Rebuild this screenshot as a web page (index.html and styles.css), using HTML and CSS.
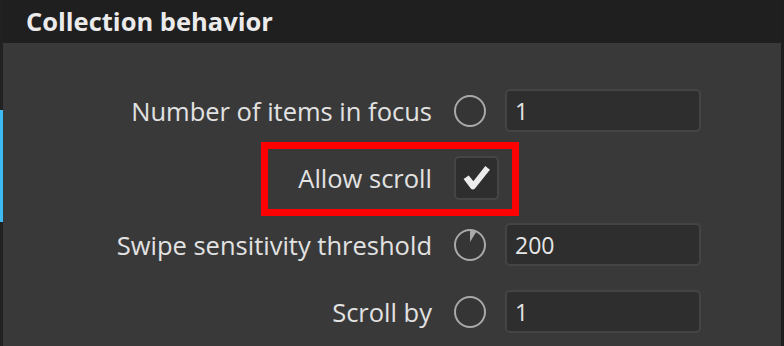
FILE: index.html
```html
<!DOCTYPE html>
<html lang="en">
<head>
  <meta charset="UTF-8">
  <meta name="viewport" content="width=device-width, initial-scale=1.0">
  <title>Collection behavior</title>
  <link rel="stylesheet" href="styles.css">
</head>
<body>
  <div class="window">
    <div class="rail">
      <div class="rail-mark"></div>
    </div>
    <div class="main">
      <div class="section-title">Collection behavior</div>
      <div class="panel">
        <div class="form">
          <label class="label" for="focusCount">Number of items in focus</label>
          <svg class="bind" viewBox="0 0 32 32"><circle cx="16" cy="16" r="15" /></svg>
          <input class="field" id="focusCount" type="text" value="1">

          <label class="label" for="allowScroll">Allow scroll</label>
          <div class="check" id="allowScroll">
            <svg viewBox="0 0 28 24"><path d="M1.5 13.5 L6.5 10 L11 15.5 L22.5 1 L27 4.5 L12.5 22.5 Q10.5 24.5 8.5 22.5 Z" /></svg>
          </div>
          <div></div>

          <label class="label" for="swipeThreshold">Swipe sensitivity threshold</label>
          <svg class="bind" viewBox="0 0 32 32">
            <circle cx="16" cy="16" r="15" />
            <path class="wedge" d="M16 13 L16 1 A15 15 0 0 1 22.5 2.5 Z" />
          </svg>
          <input class="field" id="swipeThreshold" type="text" value="200">

          <label class="label" for="scrollBy">Scroll by</label>
          <svg class="bind" viewBox="0 0 32 32"><circle cx="16" cy="16" r="15" /></svg>
          <input class="field" id="scrollBy" type="text" value="1">
        </div>
        <div class="highlight"></div>
      </div>
    </div>
    <div class="rail rail-right"></div>
  </div>
</body>
</html>
```

FILE: styles.css
```css
html, body {
  margin: 0;
  height: 100%;
}
body {
  font-family: "Open Sans", "Noto Sans", sans-serif;
  background: #393939;
  color: #e4e4e4;
  overflow: hidden;
}
.window {
  display: flex;
  height: 346px;
}
.rail {
  width: 3px;
  flex: none;
  background: #212121;
}
.rail-mark {
  margin-top: 110px;
  height: 112px;
  background: #3cbcf2;
}
.rail-right {
  background: #1e1e1e;
}
.main {
  flex: 1;
  display: flex;
  flex-direction: column;
}
.section-title {
  height: 43px;
  box-sizing: border-box;
  padding-left: 23px;
  background: #1f1f1f;
  font-size: 25.5px;
  font-weight: 700;
  line-height: 43px;
  color: #ebebeb;
}
.panel {
  position: relative;
  flex: 1;
}
.form {
  display: grid;
  grid-template-columns: 1fr 32px 196px;
  grid-auto-rows: 43px;
  column-gap: 19px;
  row-gap: 24px;
  align-items: center;
  padding: 46px 80px 0 0;
}
.label {
  text-align: right;
  padding-right: 3px;
  font-size: 25.5px;
  white-space: nowrap;
  color: #e2e2e2;
}
.bind {
  width: 32px;
  height: 32px;
}
.bind circle {
  fill: #353535;
  stroke: #a9a9a9;
  stroke-width: 2;
}
.bind .wedge {
  fill: #a9a9a9;
}
.field {
  height: 43px;
  box-sizing: border-box;
  border: 2px solid #444;
  border-radius: 5px;
  background: #2e2e2e;
  color: #e6e6e6;
  font-family: inherit;
  font-size: 23px;
  padding: 0 8px;
  outline: none;
}
.check {
  width: 45px;
  height: 44px;
  box-sizing: border-box;
  border: 2px solid #454545;
  border-radius: 5px;
  background: #2e2e2e;
  display: flex;
  align-items: center;
  justify-content: center;
}
.check svg {
  width: 29px;
  height: 25px;
  fill: #ececec;
}
.highlight {
  position: absolute;
  left: 258px;
  top: 99px;
  width: 258px;
  height: 74px;
  box-sizing: border-box;
  border: 7px solid #ff0000;
  pointer-events: none;
}
```
